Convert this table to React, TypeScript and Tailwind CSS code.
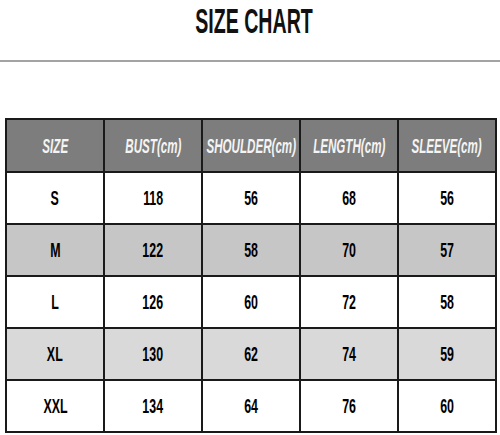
const headers = ['SIZE', 'BUST(cm)', 'SHOULDER(cm)', 'LENGTH(cm)', 'SLEEVE(cm)'];

const rows = [
  { cells: ['S', '118', '56', '68', '56'], bg: 'bg-white' },
  { cells: ['M', '122', '58', '70', '57'], bg: 'bg-[#c6c6c6]' },
  { cells: ['L', '126', '60', '72', '58'], bg: 'bg-white' },
  { cells: ['XL', '130', '62', '74', '59'], bg: 'bg-[#d9d9d9]' },
  { cells: ['XXL', '134', '64', '76', '60'], bg: 'bg-white' },
];

const App = () => {
  return (
    <div className="w-[500px] h-[435px] bg-white overflow-hidden">
      {/* Title */}
      <div className="h-[60px] flex justify-center items-start">
        <span className="inline-block whitespace-nowrap text-[35px] leading-[41px] text-[#111] font-bold font-['Liberation_Sans',sans-serif] scale-x-[0.56] translate-x-[4px]">
          SIZE CHART
        </span>
      </div>
      <div className="h-[2px] bg-[#a3a3a3]" />

      {/* Table */}
      <div className="pt-[56px] pl-[5px]">
        <table className="table-fixed w-[492px] border-collapse font-['Liberation_Sans',sans-serif]">
          <colgroup>
            {headers.map((h) => (
              <col key={h} className="w-[98px]" />
            ))}
          </colgroup>
          <thead>
            <tr className="bg-[#7d7d7d]">
              {headers.map((h) => (
                <th key={h} className="h-[53px] border-2 border-[#1a1a1a] p-0">
                  <div className="flex justify-center">
                    <span className="shrink-0 inline-block whitespace-nowrap italic font-bold text-[#f4f4f4] text-[20px] scale-x-[0.58]">
                      {h}
                    </span>
                  </div>
                </th>
              ))}
            </tr>
          </thead>
          <tbody>
            {rows.map((r) => (
              <tr key={r.cells[0]} className={r.bg}>
                {r.cells.map((c, i) => (
                  <td key={i} className="h-[52px] border-2 border-[#1a1a1a] p-0 text-center">
                    <span className="inline-block font-bold text-black text-[20px] scale-x-[0.62]">{c}</span>
                  </td>
                ))}
              </tr>
            ))}
          </tbody>
        </table>
      </div>
    </div>
  );
};

export default App;
